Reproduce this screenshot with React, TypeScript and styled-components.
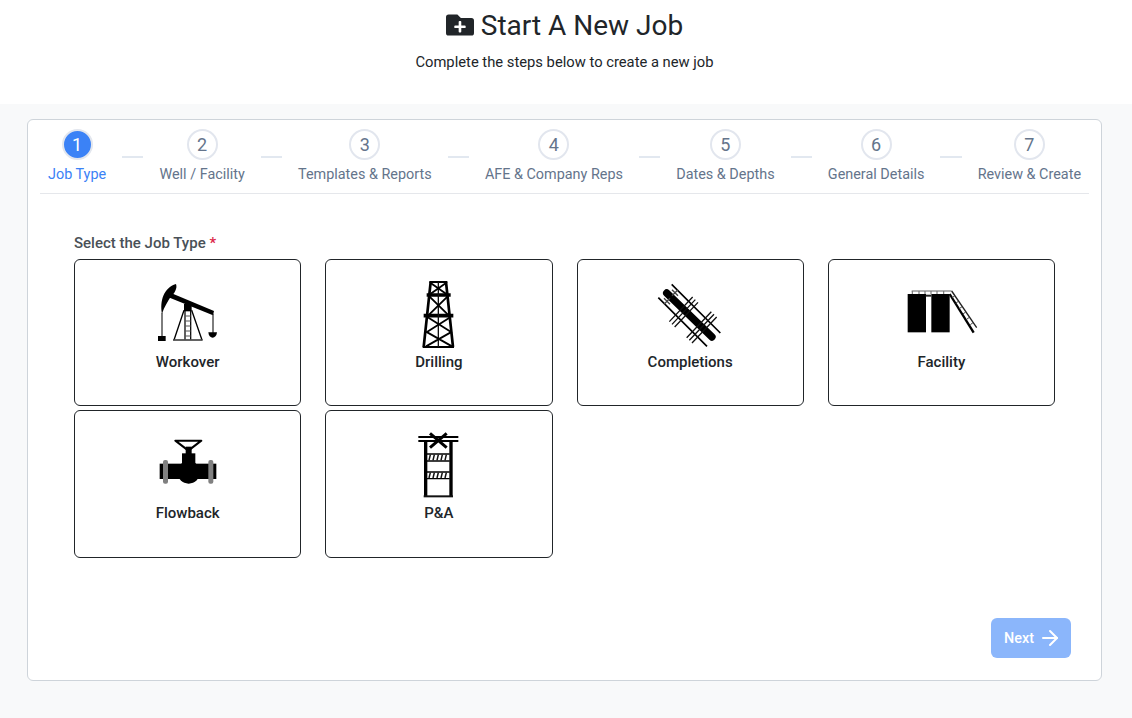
import React from 'react';
import styled, { createGlobalStyle } from 'styled-components';
import { FaFolderPlus } from 'react-icons/fa';
import { ArrowRight } from 'lucide-react';

const GlobalStyle = createGlobalStyle`
  html, body {
    margin: 0;
    padding: 0;
    background: #f8f9fa;
    font-family: Roboto, "Liberation Sans", sans-serif;
  }
  * {
    box-sizing: border-box;
  }
`;

const STEPS = [
  'Job Type',
  'Well / Facility',
  'Templates & Reports',
  'AFE & Company Reps',
  'Dates & Depths',
  'General Details',
  'Review & Create',
];

const WorkoverIcon = () => (
  <JobSvg viewBox="8 0 270 240">
    <path d="M65 128C58 90 70 50 107 39C112 52 102 68 92 76C82 92 72 108 65 128Z" fill="#000" />
    <path d="M92 66L221 120L218 133L88 80Z" fill="#000" />
    <path d="M65 125V196M218 128V186" stroke="#222" strokeWidth="3.5" fill="none" />
    <rect x="53" y="195" width="23" height="15" fill="#000" />
    <path d="M204 184H230C229 195 223 200 217 200C210 200 205 195 204 184Z" fill="#000" />
    <rect x="131" y="99" width="23" height="22" fill="#000" />
    <path d="M131 118L101 207M154 118L185 207" stroke="#000" strokeWidth="4" fill="none" />
    <path d="M134 120V206M151 120V206" stroke="#111" strokeWidth="4" fill="none" />
    <path d="M134 135H151M134 150H151M134 165H151M134 180H151M134 195H151" stroke="#555" strokeWidth="3.5" />
    <path d="M98 207H187" stroke="#444" strokeWidth="5" />
  </JobSvg>
);

const DrillingIcon = () => (
  <JobSvg viewBox="-18 0 270 240">
    <path d="M92 33L71 228M138 33L159 228" stroke="#000" strokeWidth="8" fill="none" />
    <path d="M88 33H142M68 228H162" stroke="#000" strokeWidth="6" />
    <path d="M80 72H152M71 134H160" stroke="#000" strokeWidth="11" />
    <path d="M115 33V228" stroke="#111" strokeWidth="4" />
    <path
      d="M92 36L138 68M138 36L92 68M88 76L143 130M143 76L88 130M82 138L152 182M152 138L82 182M78 182L156 226M156 182L78 226"
      stroke="#000"
      strokeWidth="5.5"
      fill="none"
    />
  </JobSvg>
);

const CompletionsIcon = () => (
  <JobSvg viewBox="-15 0 270 240">
    <path d="M50 66L186 198" stroke="#000" strokeWidth="22" strokeLinecap="round" />
    <path d="M65 40L211 186M25 80L171 226" stroke="#000" strokeWidth="5" />
    <path d="M66 56L84 74M84 56L66 74M42 82L60 100M60 82L42 100" stroke="#444" strokeWidth="4" />
    <path
      d="M58 152L128 78M66 160L136 86M74 168L144 94M110 200L184 122M118 208L192 130M126 216L200 138"
      stroke="#111"
      strokeWidth="4"
    />
  </JobSvg>
);

const FacilityIcon = () => (
  <JobSvg viewBox="-11 -15 270 240">
    <rect x="24" y="54" width="55" height="115" fill="#000" />
    <rect x="95" y="54" width="55" height="115" fill="#000" />
    <path d="M78 59H95" stroke="#222" strokeWidth="6" />
    <path d="M36 45H156" stroke="#999" strokeWidth="5" />
    <path d="M38 45V54M58 45V54M76 45V54M94 45V54M112 45V54M132 45V54" stroke="#777" strokeWidth="3.5" />
    <path d="M150 54L222 170" stroke="#000" strokeWidth="7" />
    <path d="M156 45L231 155" stroke="#222" strokeWidth="4" />
    <path d="M165 60L157 65M176 76L168 82M187 92L179 98M198 108L190 114M209 124L201 130M220 140L212 146" stroke="#444" strokeWidth="3" />
  </JobSvg>
);

const FlowbackIcon = () => (
  <JobSvg viewBox="-22 -12 270 240">
    <rect x="28" y="113" width="170" height="46" fill="#000" />
    <circle cx="115" cy="139" r="34" fill="#000" />
    <rect x="95" y="82" width="40" height="40" fill="#000" />
    <rect x="106" y="62" width="18" height="24" fill="#000" />
    <path d="M75 44H153L114 74Z" stroke="#000" strokeWidth="6" fill="none" strokeLinejoin="round" />
    <rect x="38" y="102" width="15" height="71" rx="6" fill="#808080" />
    <rect x="174" y="102" width="15" height="71" rx="6" fill="#808080" />
  </JobSvg>
);

const PluggingIcon = () => (
  <JobSvg viewBox="-33 -12 270 240">
    <path d="M40 33H160M40 45H160" stroke="#000" strokeWidth="6" />
    <path d="M62 45V212M138 45V212" stroke="#000" strokeWidth="10" />
    <path d="M75 22L125 65M125 22L75 65" stroke="#000" strokeWidth="9" />
    <path d="M56 211H144" stroke="#111" strokeWidth="6" />
    <path d="M66 84H134M66 105H134M66 138H134M66 158H134" stroke="#000" strokeWidth="4" />
    <path
      d="M72 103L76 86M84 103L88 86M96 103L100 86M108 103L112 86M120 103L124 86M72 156L76 140M84 156L88 140M96 156L100 140M108 156L112 140M120 156L124 140"
      stroke="#111"
      strokeWidth="4.5"
    />
  </JobSvg>
);

const JOB_TYPES = [
  { name: 'Workover', icon: <WorkoverIcon /> },
  { name: 'Drilling', icon: <DrillingIcon /> },
  { name: 'Completions', icon: <CompletionsIcon /> },
  { name: 'Facility', icon: <FacilityIcon /> },
  { name: 'Flowback', icon: <FlowbackIcon /> },
  { name: 'P&A', icon: <PluggingIcon /> },
];

const App = () => {
  return (
    <Page>
      <GlobalStyle />
      <Header>
        <Title>
          <FaFolderPlus size={28} />
          Start A New Job
        </Title>
        <Subtitle>Complete the steps below to create a new job</Subtitle>
      </Header>
      <Panel>
        <Stepper>
          {STEPS.map((step, i) => (
            <React.Fragment key={step}>
              {i > 0 && <Connector />}
              <Step>
                <StepCircle $active={i === 0}>{i + 1}</StepCircle>
                <StepLabel $active={i === 0}>{step}</StepLabel>
              </Step>
            </React.Fragment>
          ))}
        </Stepper>
        <Body>
          <FieldLabel>
            Select the Job Type <Required>*</Required>
          </FieldLabel>
          <JobGrid>
            {JOB_TYPES.map((job) => (
              <JobCard key={job.name}>
                {job.icon}
                <JobName>{job.name}</JobName>
              </JobCard>
            ))}
          </JobGrid>
        </Body>
        <Footer>
          <NextButton disabled>
            Next
            <ArrowRight size={24} strokeWidth={2} />
          </NextButton>
        </Footer>
      </Panel>
    </Page>
  );
};

export default App;

const Page = styled.div`
  width: 1132px;
  height: 718px;
  overflow: hidden;
  background: #f8f9fa;
`;

const Header = styled.header`
  height: 104px;
  padding-top: 8px;
  background: #fff;
  text-align: center;
  color: #212529;
`;

const Title = styled.h1`
  display: flex;
  align-items: center;
  justify-content: center;
  gap: 7px;
  height: 34px;
  margin: 0;
  padding-right: 3px;
  font-size: 28px;
  font-weight: 400;
`;

const Subtitle = styled.p`
  margin: 10px 0 0;
  padding-right: 3px;
  font-size: 14.75px;
  line-height: 20px;
`;

const Panel = styled.main`
  display: flex;
  flex-direction: column;
  width: 1075px;
  height: 562px;
  margin: 15px 0 0 27px;
  background: #fff;
  border: 1px solid #ced4da;
  border-radius: 6px;
`;

const Stepper = styled.div`
  display: flex;
  align-items: flex-start;
  margin: 0 12px;
  padding: 9px 8px 8px;
  border-bottom: 1px solid #e5e7eb;
`;

const Connector = styled.div`
  flex: 1;
  height: 2px;
  margin: 27px 16px 0;
  background: #e2e8f0;
`;

const Step = styled.div`
  display: flex;
  flex-direction: column;
  align-items: center;
  gap: 5px;
`;

const StepCircle = styled.div<{ $active: boolean }>`
  display: flex;
  align-items: center;
  justify-content: center;
  width: 31px;
  height: 31px;
  padding-bottom: 1px;
  border-radius: 50%;
  border: 2px solid #e2e6ee;
  background: ${(props) => (props.$active ? '#3b82f6' : '#fff')};
  color: ${(props) => (props.$active ? '#fff' : '#64748b')};
  font-size: 18px;
`;

const StepLabel = styled.div<{ $active: boolean }>`
  font-size: 14.4px;
  line-height: 20px;
  white-space: nowrap;
  color: ${(props) => (props.$active ? '#3b82f6' : '#64748b')};
`;

const Body = styled.div`
  padding: 39px 46px 0;
`;

const FieldLabel = styled.div`
  margin-bottom: 6px;
  font-size: 15px;
  font-weight: 500;
  line-height: 20px;
  color: #495057;
`;

const Required = styled.span`
  color: #dc2647;
`;

const JobGrid = styled.div`
  display: grid;
  grid-template-columns: repeat(4, 1fr);
  grid-template-rows: 147px 148px;
  column-gap: 24px;
  row-gap: 4px;
`;

const JobCard = styled.button`
  display: flex;
  flex-direction: column;
  align-items: center;
  padding: 11px 0 0;
  background: #fff;
  border: 1px solid #212529;
  border-radius: 6px;
  font-family: inherit;
  cursor: pointer;
`;

const JobSvg = styled.svg`
  display: block;
  flex: none;
  width: 90px;
  height: 80px;
`;

const JobName = styled.div`
  margin-top: 1px;
  font-size: 15px;
  font-weight: 500;
  line-height: 20px;
  color: #212529;
`;

const Footer = styled.div`
  display: flex;
  justify-content: flex-end;
  margin-top: auto;
  padding: 0 30px 22px;
`;

const NextButton = styled.button`
  display: flex;
  align-items: center;
  justify-content: center;
  gap: 4px;
  width: 80px;
  height: 40px;
  padding: 0 0 0 4px;
  background: #8bb6fb;
  border: none;
  border-radius: 6px;
  color: #fff;
  font-family: inherit;
  font-size: 14.4px;
  font-weight: 500;
`;
